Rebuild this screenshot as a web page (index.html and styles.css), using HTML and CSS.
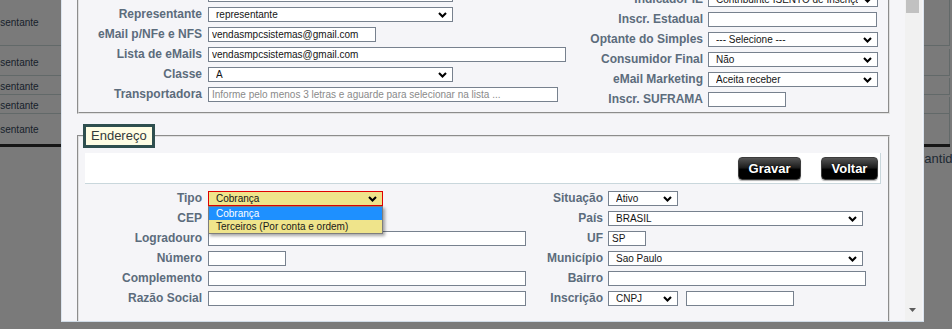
FILE: index.html
```html
<!DOCTYPE html>
<html lang="pt-BR">
<head>
<meta charset="utf-8">
<title>Cadastro de Cliente</title>
<link rel="stylesheet" href="styles.css">
</head>
<body>
<div class="page">
  <div class="bg-rows">
    <div class="bg-row r1"><div class="bg-first">Representante</div><div class="bg-last"></div></div>
    <div class="bg-row r2"><div class="bg-first">Representante</div><div class="bg-last"></div></div>
    <div class="bg-row r3"><div class="bg-first">Representante</div><div class="bg-last"></div></div>
    <div class="bg-row r4"><div class="bg-first">Representante</div><div class="bg-last"></div></div>
    <div class="bg-row r5"><div class="bg-first">Representante</div><div class="bg-last"></div></div>
  </div>
  <div class="bg-head"><div class="bg-head-spacer"></div><div class="bg-head-cell">Quantidade</div></div>
</div>

<div class="modal">
  <div class="modal-body">
    <div class="sheet">
      <fieldset class="box box-top">
        <div class="cols">
          <div class="form form-left">
            <label class="lbl">Vendedor</label>
            <div class="fld sel w245"><span class="val">vendedor</span><svg class="chev" viewBox="0 0 9 6"><path d="M1 1l3.5 3.5L8 1"/></svg></div>
            <label class="lbl">Representante</label>
            <div class="fld sel w245"><span class="val">representante</span><svg class="chev" viewBox="0 0 9 6"><path d="M1 1l3.5 3.5L8 1"/></svg></div>
            <label class="lbl">eMail p/NFe e NFS</label>
            <input class="fld w168" type="text" value="vendasmpcsistemas@gmail.com">
            <label class="lbl">Lista de eMails</label>
            <input class="fld w358" type="text" value="vendasmpcsistemas@gmail.com">
            <label class="lbl">Classe</label>
            <div class="fld sel w245"><span class="val">A</span><svg class="chev" viewBox="0 0 9 6"><path d="M1 1l3.5 3.5L8 1"/></svg></div>
            <label class="lbl">Transportadora</label>
            <input class="fld w350" type="text" placeholder="Informe pelo menos 3 letras e aguarde para selecionar na lista ...">
          </div>
          <div class="form form-right">
            <label class="lbl">Indicador IE</label>
            <div class="fld sel w170"><span class="val">Contribuinte ISENTO de Inscrição</span><svg class="chev" viewBox="0 0 9 6"><path d="M1 1l3.5 3.5L8 1"/></svg></div>
            <label class="lbl">Inscr. Estadual</label>
            <input class="fld w169" type="text" value="">
            <label class="lbl">Optante do Simples</label>
            <div class="fld sel w170"><span class="val">--- Selecione ---</span><svg class="chev" viewBox="0 0 9 6"><path d="M1 1l3.5 3.5L8 1"/></svg></div>
            <label class="lbl">Consumidor Final</label>
            <div class="fld sel w170"><span class="val">Não</span><svg class="chev" viewBox="0 0 9 6"><path d="M1 1l3.5 3.5L8 1"/></svg></div>
            <label class="lbl">eMail Marketing</label>
            <div class="fld sel w170"><span class="val">Aceita receber</span><svg class="chev" viewBox="0 0 9 6"><path d="M1 1l3.5 3.5L8 1"/></svg></div>
            <label class="lbl">Inscr. SUFRAMA</label>
            <input class="fld w78" type="text" value="">
          </div>
        </div>
      </fieldset>

      <fieldset class="box box-end">
        <legend class="legend">Endereço</legend>
        <div class="toolbar">
          <button class="btn btn-gravar" type="button">Gravar</button>
          <button class="btn btn-voltar" type="button">Voltar</button>
        </div>
        <div class="form form-end">
          <label class="lbl lbl-l">Tipo</label>
          <div class="dd-wrap">
            <div class="fld sel tipo w175"><span class="val">Cobrança</span><svg class="chev" viewBox="0 0 9 6"><path d="M1 1l3.5 3.5L8 1"/></svg></div>
            <div class="dd-list">
              <div class="dd-opt on">Cobrança</div>
              <div class="dd-opt">Terceiros (Por conta e ordem)</div>
            </div>
          </div>
          <label class="lbl lbl-r">Situação</label>
          <div class="fld sel w70"><span class="val">Ativo</span><svg class="chev" viewBox="0 0 9 6"><path d="M1 1l3.5 3.5L8 1"/></svg></div>

          <label class="lbl lbl-l">CEP</label>
          <input class="fld w80" type="text" value="">
          <label class="lbl lbl-r">País</label>
          <div class="fld sel w255"><span class="val">BRASIL</span><svg class="chev" viewBox="0 0 9 6"><path d="M1 1l3.5 3.5L8 1"/></svg></div>

          <label class="lbl lbl-l">Logradouro</label>
          <input class="fld w318" type="text" value="">
          <label class="lbl lbl-r">UF</label>
          <input class="fld w38" type="text" value="SP">

          <label class="lbl lbl-l">Número</label>
          <input class="fld w78" type="text" value="">
          <label class="lbl lbl-r">Município</label>
          <div class="fld sel w255"><span class="val">Sao Paulo</span><svg class="chev" viewBox="0 0 9 6"><path d="M1 1l3.5 3.5L8 1"/></svg></div>

          <label class="lbl lbl-l">Complemento</label>
          <input class="fld w318" type="text" value="">
          <label class="lbl lbl-r">Bairro</label>
          <input class="fld w258" type="text" value="">

          <label class="lbl lbl-l">Razão Social</label>
          <input class="fld w318" type="text" value="">
          <label class="lbl lbl-r">Inscrição</label>
          <div class="pair">
            <div class="fld sel w70"><span class="val">CNPJ</span><svg class="chev" viewBox="0 0 9 6"><path d="M1 1l3.5 3.5L8 1"/></svg></div>
            <input class="fld w108" type="text" value="">
          </div>
        </div>
      </fieldset>
    </div>
  </div>
  <div class="scrollbar">
    <div class="thumb"></div>
    <div class="track"></div>
    <div class="arrow"><svg width="7" height="4" viewBox="0 0 7 4"><path d="M0 0h7L3.5 4z" fill="#5c5c5c"/></svg></div>
  </div>
</div>
</body>
</html>
```

FILE: styles.css
```css
* { box-sizing: border-box; }

html, body {
  margin: 0;
  padding: 0;
}

body {
  width: 952px;
  height: 329px;
  overflow: hidden;
  position: relative;
  background: #7a7a7a;
  font-family: "Liberation Sans", Arial, sans-serif;
}

/* ---------- background page (under the overlay) ---------- */
.bg-rows {
  width: 950px;
  margin-top: -4px;
}

.bg-row {
  display: flex;
  align-items: center;
  border-bottom: 1px solid #626969;
  font-size: 10px;
  color: #16212b;
}

.bg-row.r1 { height: 50px; padding-top: 3px; }
.bg-row.r2 { height: 30px; padding-top: 3px; }
.bg-row.r3 { height: 19px; padding-top: 2px; }
.bg-row.r4 { height: 19px; padding-top: 2px; }
.bg-row.r5 { height: 33px; border-bottom: 3px solid #161616; }

.bg-first {
  width: 120px;
  text-indent: -27px;
  white-space: nowrap;
}

.bg-last {
  margin-left: auto;
  align-self: stretch;
  border-right: 1px solid #626969;
  width: 1px;
}

.bg-head {
  display: flex;
  margin-top: 4px;
  font-size: 13px;
  line-height: 15px;
  color: #1d2933;
}

.bg-head-spacer { width: 907px; flex: none; }
.bg-head-cell { white-space: nowrap; }

/* ---------- modal ---------- */
.modal {
  position: absolute;
  left: 61px;
  top: 0;
  width: 863px;
  height: 322px;
  display: flex;
  background: #f5f5f8;
  border-left: 1px solid #dbe4ee;
  border-right: 1px solid #dbe4ee;
  border-bottom: 1px solid #cfdbe7;
  padding-right: 1px;
}

.modal-body {
  flex: 1;
  overflow: hidden;
  padding: 0 15px;
}

.sheet { margin-top: -20px; }

.scrollbar {
  width: 17px;
  flex: none;
  display: flex;
  flex-direction: column;
  background: #f1f1f1;
}

.thumb {
  height: 13px;
  margin: 0 3px 0 1px;
  background: #c1c1c1;
}

.track { flex: 1; }

.arrow {
  height: 17px;
  display: flex;
  justify-content: center;
  align-items: flex-start;
  padding-top: 4px;
  padding-right: 2px;
}

.arrow svg { display: block; }

/* ---------- fieldsets ---------- */
.box {
  margin: 0;
  min-width: 0;
  border: 2px groove #e0e0e0;
}

.box-top { padding: 5px 0 5px 0; }

.box-end {
  margin-top: 10px;
  padding: 5px 7px 30px 6px;
}

.legend {
  margin-left: -2px;
  padding: 0 5px;
  border: 3px solid #2f4f4f;
  background: #fffde4;
  color: #333a3a;
  font-size: 13px;
  line-height: 18px;
}

.cols {
  display: flex;
  align-items: flex-start;
}

/* ---------- form grids ---------- */
.form {
  display: grid;
  grid-auto-rows: 15px;
  row-gap: 5px;
  align-items: center;
  justify-items: start;
}

.form-left { grid-template-columns: 129px 377px; }
.form-right { grid-template-columns: 123px 180px; margin-top: 5px; }
.form-end {
  grid-template-columns: 123px 324px 76px 1fr;
  padding-top: 7px;
}

.lbl {
  justify-self: stretch;
  text-align: right;
  white-space: nowrap;
  font-size: 12px;
  font-weight: bold;
  line-height: 15px;
  color: #5c6c7c;
}

.form-left .lbl, .lbl-l { padding-right: 6px; }
.form-right .lbl, .lbl-r { padding-right: 5px; }

/* ---------- fields ---------- */
.fld {
  height: 15px;
  margin: 0;
  border: 1px solid #77818e;
  border-radius: 0;
  background: #fff;
  font-family: "Liberation Sans", Arial, sans-serif;
  font-size: 10px;
  color: #141414;
}

input.fld {
  padding: 0 3px;
  outline: none;
}

input.fld::placeholder { color: #8a8a8a; }

.sel {
  display: flex;
  align-items: center;
  padding: 0 5px 0 7px;
}

.sel .val {
  flex: 1;
  min-width: 0;
  overflow: hidden;
  white-space: nowrap;
  line-height: 13px;
  margin-right: 5px;
}

.chev {
  width: 9px;
  height: 6px;
  flex: none;
  display: block;
}

.chev path {
  fill: none;
  stroke: #000;
  stroke-width: 2.1;
}

.sel.tipo {
  background: #efe48b;
  border-color: #e00000;
}

.pair {
  display: flex;
  gap: 8px;
}

.w38 { width: 38px; }
.w70 { width: 70px; }
.w78 { width: 78px; }
.w80 { width: 80px; }
.w108 { width: 108px; }
.w168 { width: 168px; }
.w169 { width: 169px; }
.w170 { width: 170px; }
.w175 { width: 175px; }
.w245 { width: 245px; }
.w255 { width: 255px; }
.w258 { width: 258px; }
.w318 { width: 318px; }
.w350 { width: 350px; }
.w358 { width: 358px; }

/* ---------- open dropdown ---------- */
.dd-wrap { position: relative; }

.dd-list {
  position: absolute;
  left: 0;
  top: 100%;
  width: 175px;
  z-index: 5;
  border: 1px solid #7d7d7d;
  background: #efe48b;
  box-shadow: 2px 2px 3px rgba(0, 0, 0, 0.35);
  font-size: 10px;
}

.dd-opt {
  height: 13px;
  line-height: 13px;
  padding-left: 7px;
  white-space: nowrap;
  color: #1a1a1a;
}

.dd-opt.on {
  background: #1e90ff;
  color: #fff;
}

/* ---------- toolbar ---------- */
.toolbar {
  height: 31px;
  display: flex;
  justify-content: flex-end;
  align-items: flex-start;
  gap: 20px;
  padding: 4px 2px 0 0;
  background: #fff;
  border-right: 1px solid #c9d7dc;
  border-bottom: 1px solid #c9d7dc;
}

.btn {
  height: 23px;
  padding: 0;
  border: 1px solid #3c3c3c;
  border-radius: 4px;
  background: linear-gradient(#545454, #1e1e1e 45%, #000 55%, #000);
  box-shadow: 0 1px 1px rgba(0, 0, 0, 0.3);
  color: #fff;
  font-family: "Liberation Sans", Arial, sans-serif;
  font-size: 13px;
  font-weight: bold;
  text-shadow: 0 0 2px #000;
}

.btn-gravar { width: 63px; }
.btn-voltar { width: 57px; }
```
